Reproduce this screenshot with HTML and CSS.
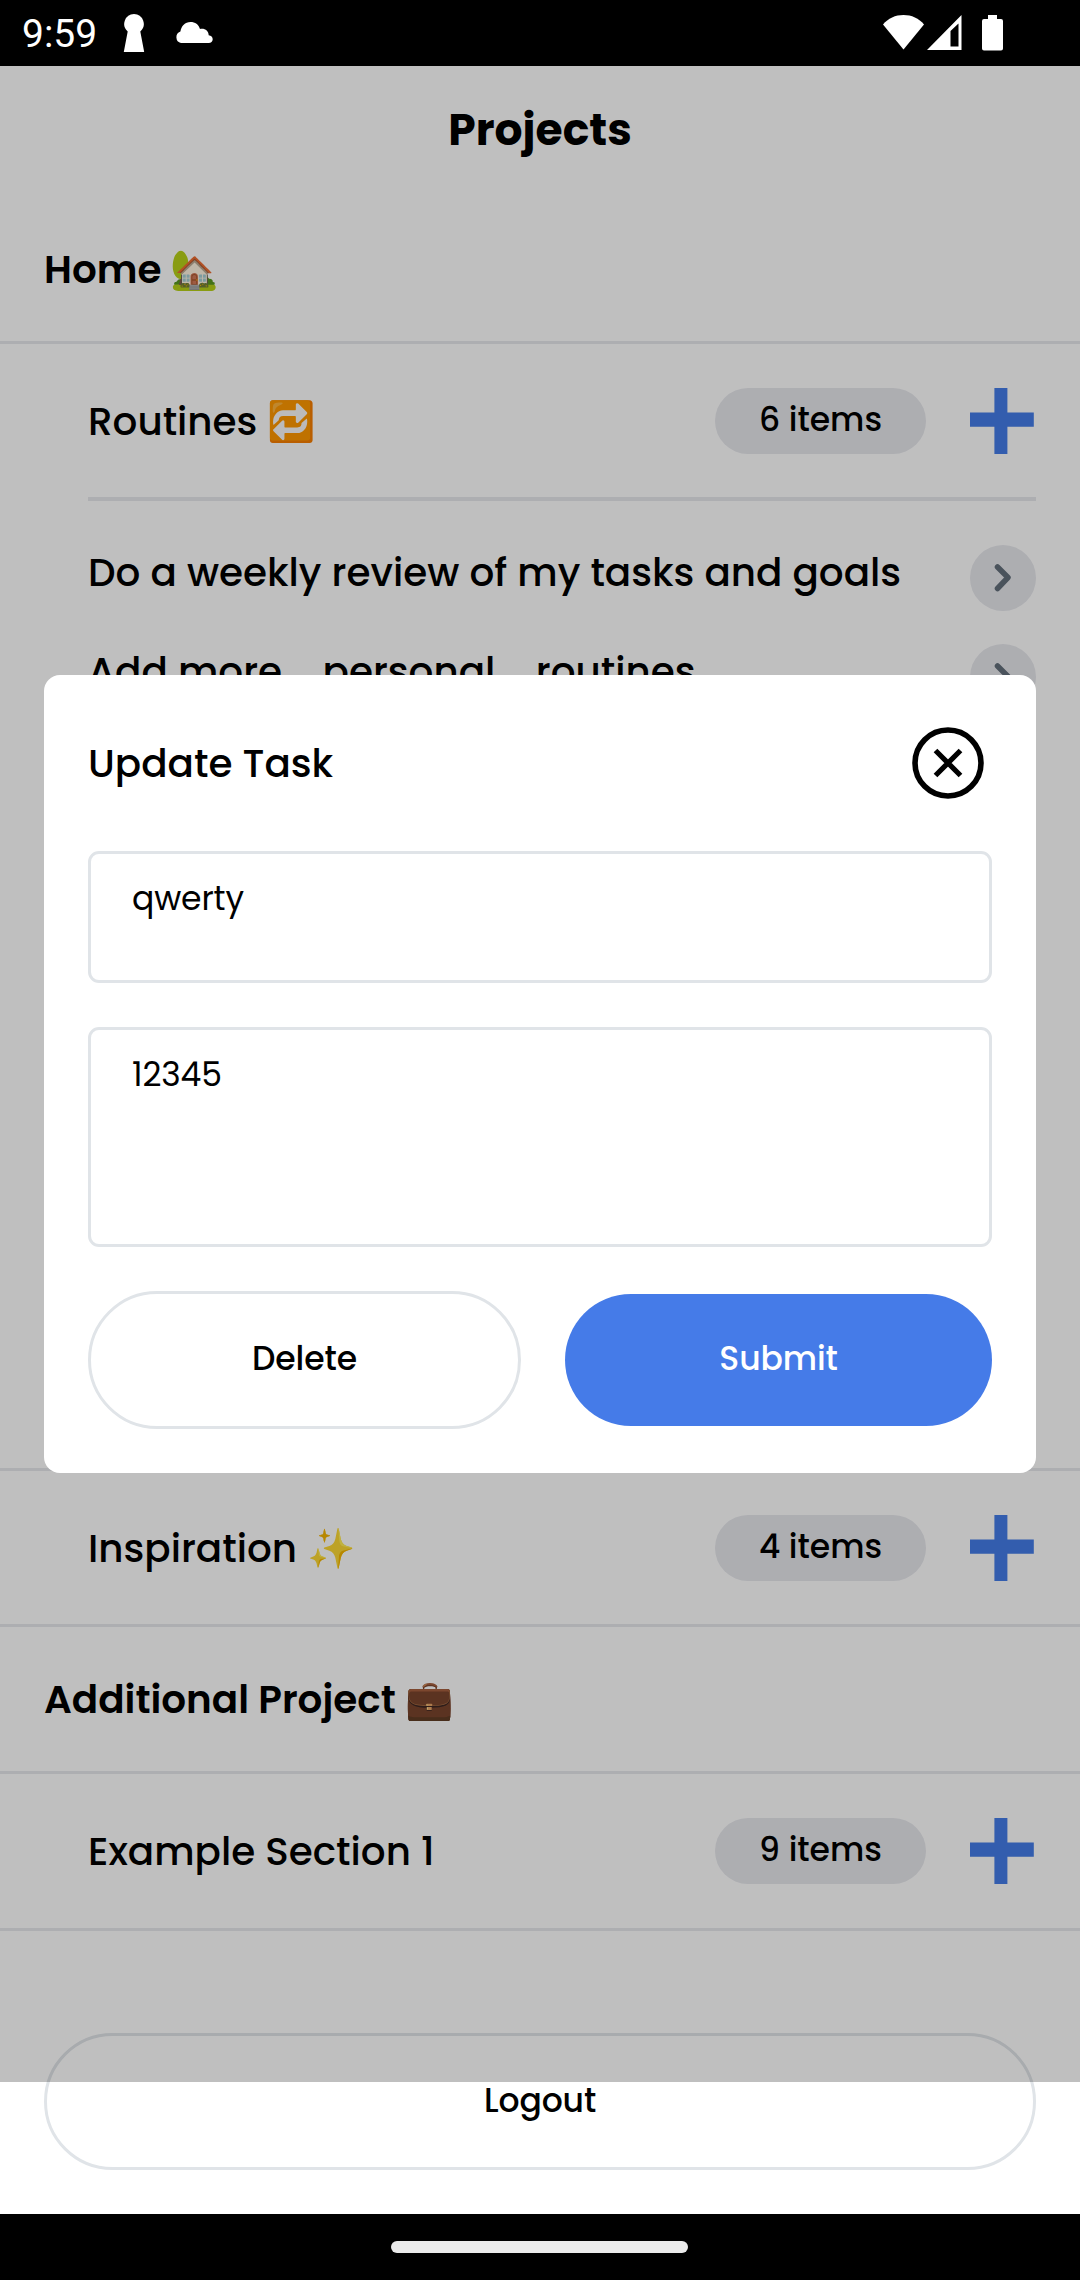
FILE: index.html
```html
<!DOCTYPE html>
<html lang="en">
<head>
<meta charset="utf-8">
<title>Projects</title>
<link rel="stylesheet" href="styles.css">
</head>
<body>
<div class="phone">
  <header class="status-bar">
    <div class="status-left">
      <span class="clock">9:59</span>
      <svg class="keyhole" width="22" height="38" viewBox="0 0 22 38"><path d="M11 0a9.900 9.900 0 0 1 6.300 17.400L21.200 38H.8L4.700 17.400A9.900 9.900 0 0 1 11 0z" fill="#fff"/></svg>
      <svg class="cloud" width="38" height="21" viewBox="0 0 38 21"><path d="M6 21a6 6 0 0 1-.6-11.500C6.300 4 10 0 15.500 0c4.600 0 8.200 2.600 9.500 7 5-1 8.500 2 8.700 6.200 2.500.2 4 1.800 4 4 0 2.300-1.700 3.800-4 3.800z" fill="#fff"/></svg>
    </div>
    <div class="status-right">
      <svg width="41" height="35" viewBox="0 0 41 35"><path d="M0 9.500C5 3.300 12.500 0 20.500 0S36 3.300 41 9.500L20.500 34.500z" fill="#fff"/></svg>
      <svg class="signal" width="35" height="35" viewBox="0 0 35 35"><path fill-rule="evenodd" d="M0 35L34.500 0v35zM23.500 31.500H31.500V8.500L23.500 16z" fill="#fff"/></svg>
      <svg class="battery" width="21" height="36" viewBox="0 0 21 36"><path d="M6 0h9v4h4a2 2 0 0 1 2 2v27.500a2 2 0 0 1-2 2H2a2 2 0 0 1-2-2V6a2 2 0 0 1 2-2h4z" fill="#fff"/></svg>
    </div>
  </header>

  <main class="screen">
    <h1 class="page-title">Projects</h1>

    <h2 class="project">Home 🏡</h2>

    <section class="section expanded">
      <div class="section-head">
        <span class="section-name">Routines 🔁</span>
        <span class="count">6 items</span>
        <svg class="plus" width="66" height="66" viewBox="0 0 66 66"><path d="M24.400 0h13v24.500h26.400v14.200H37.400V66h-13V38.700H0V24.500h24.400z" fill="#447de8"/></svg>
      </div>
      <ul class="tasks">
        <li class="task">
          <span class="task-name">Do a weekly review of my tasks and goals</span>
          <span class="go"><svg width="66" height="66" viewBox="0 0 66 66"><path d="M27.500 22L38 32.500 27.500 43.500" fill="none" stroke="#636f7b" stroke-width="5.500" stroke-linecap="round" stroke-linejoin="round"/></svg></span>
        </li>
        <li class="task">
          <span class="task-name">Add more    personal    routines</span>
          <span class="go"><svg width="66" height="66" viewBox="0 0 66 66"><path d="M27.500 22L38 32.500 27.500 43.500" fill="none" stroke="#636f7b" stroke-width="5.500" stroke-linecap="round" stroke-linejoin="round"/></svg></span>
        </li>
      </ul>
    </section>

    <section class="section">
      <div class="section-head">
        <span class="section-name">Inspiration ✨</span>
        <span class="count">4 items</span>
        <svg class="plus" width="66" height="66" viewBox="0 0 66 66"><path d="M24.400 0h13v24.500h26.400v14.200H37.400V66h-13V38.700H0V24.500h24.400z" fill="#447de8"/></svg>
      </div>
    </section>

    <h2 class="project">Additional Project 💼</h2>

    <section class="section last">
      <div class="section-head">
        <span class="section-name">Example Section 1</span>
        <span class="count">9 items</span>
        <svg class="plus" width="66" height="66" viewBox="0 0 66 66"><path d="M24.400 0h13v24.500h26.400v14.200H37.400V66h-13V38.700H0V24.500h24.400z" fill="#447de8"/></svg>
      </div>
    </section>

    <button class="btn outline logout">Logout</button>

    <div class="backdrop">
      <div class="modal">
        <div class="modal-head">
          <span class="modal-title">Update Task</span>
          <svg width="88" height="88" viewBox="0 0 88 88" fill="none" stroke="#000"><circle cx="44" cy="44" r="33" stroke-width="5.600"/><path d="M31.500 31.500l25 25M56.500 31.500l-25 25" stroke-width="5.200"/></svg>
        </div>
        <div class="field">qwerty</div>
        <div class="field tall">12345</div>
        <div class="actions">
          <button class="btn outline">Delete</button>
          <button class="btn primary">Submit</button>
        </div>
      </div>
    </div>
  </main>

  <footer class="nav-bar"><span class="handle"></span></footer>
</div>
</body>
</html>
```
FILE: styles.css
```css
* {
  box-sizing: border-box;
}

body {
  margin: 0;
  background: #fff;
  color: #000;
  font-family: Poppins, Inter, "Noto Color Emoji", sans-serif;
  font-size: 38.9px;
  font-weight: 500;
}

h1,
h2,
ul {
  margin: 0;
  padding: 0;
  list-style: none;
}

svg {
  display: block;
  flex: none;
}

.phone {
  width: 1080px;
  height: 2280px;
  display: flex;
  flex-direction: column;
  overflow: hidden;
}

/* System status bar */
.status-bar {
  height: 66px;
  flex: none;
  display: flex;
  justify-content: space-between;
  padding: 0 77px 0 22px;
  background: #000;
}

.status-left,
.status-right {
  display: flex;
  align-items: flex-start;
}

.clock {
  width: 101px;
  color: #fff;
  font: 400 39px/69px Roboto, sans-serif;
}

.keyhole {
  margin: 14px 0 0;
}

.cloud {
  margin: 22px 0 0 30px;
}

.status-right {
  padding-top: 15px;
}

.signal {
  margin-left: 3px;
}

.battery {
  margin-left: 20px;
}

/* Project list */
.screen {
  position: relative;
  height: 2148px;
  flex: none;
  display: flex;
  flex-direction: column;
}

.page-title {
  height: 132px;
  font-size: 44px;
  font-weight: 700;
  line-height: 127px;
  text-align: center;
}

.project {
  height: 147px;
  padding-left: 44px;
  border-bottom: 3px solid #e7e8ed;
  font-size: 38.9px;
  font-weight: 600;
  line-height: 146px;
}

.page-title + .project {
  height: 146px;
  line-height: 143px;
}

.section {
  border-bottom: 3px solid #e7e8ed;
}

.section-head {
  height: 153px;
  display: flex;
  align-items: center;
  padding: 1px 44px 0 88px;
}

.last .section-head {
  height: 154px;
  padding-top: 0;
}

.section-name {
  flex: 1;
  height: 66px;
  line-height: 68px;
}

.count {
  width: 211px;
  height: 66px;
  margin-right: 44px;
  border-radius: 33px;
  background: #e7e8ed;
  font-size: 33px;
  line-height: 64px;
  text-align: center;
}

.expanded {
  height: 1127px;
}

.expanded .section-head {
  height: 157px;
  margin: 0 44px 0 88px;
  padding: 1px 0 0;
  border-bottom: 4px solid #e7e8ed;
}

.tasks {
  display: flex;
  flex-direction: column;
  gap: 33px;
  padding: 44px 44px 0 88px;
}

.task {
  display: flex;
  justify-content: space-between;
}

.task-name {
  line-height: 56px;
  white-space: pre;
}

.go {
  width: 66px;
  height: 66px;
  border-radius: 50%;
  background: #e7e8ed;
}

/* Buttons */
.btn {
  height: 132px;
  padding: 0 0 2px;
  border: 0;
  border-radius: 66px;
  background: none;
  color: #000;
  font: inherit;
  font-size: 33px;
  letter-spacing: -0.1px;
}

.outline {
  height: 138px;
  border: 3px solid #e0e4e8;
  border-radius: 69px;
}

.primary {
  background: #457be8;
  color: #fff;
}

.logout {
  height: 137px;
  margin: 102px 44px 0;
}

/* Task dialog over the dimmed list */
.backdrop {
  position: absolute;
  inset: 0 0 132px;
  padding: 609px 44px 0;
  background: rgba(0, 0, 0, 0.25);
}

.modal {
  height: 798px;
  display: flex;
  flex-direction: column;
  gap: 44px;
  padding: 44px;
  border-radius: 16px;
  background: #fff;
}

.modal-head {
  display: flex;
  align-items: center;
  justify-content: space-between;
}

.field {
  height: 132px;
  padding: 20px 41px;
  border: 3px solid #e0e4e8;
  border-radius: 11px;
  font-size: 33px;
  font-weight: 400;
  line-height: 50px;
  letter-spacing: -0.15px;
}

.tall {
  height: 220px;
}

.actions {
  display: grid;
  grid-template-columns: 433px 427px;
  align-items: center;
  gap: 44px;
}

/* Gesture navigation */
.nav-bar {
  height: 66px;
  flex: none;
  display: flex;
  justify-content: center;
  padding: 27px 1px 0 0;
  background: #000;
}

.handle {
  width: 297px;
  height: 12px;
  border-radius: 6px;
  background: #ebebeb;
}
```
